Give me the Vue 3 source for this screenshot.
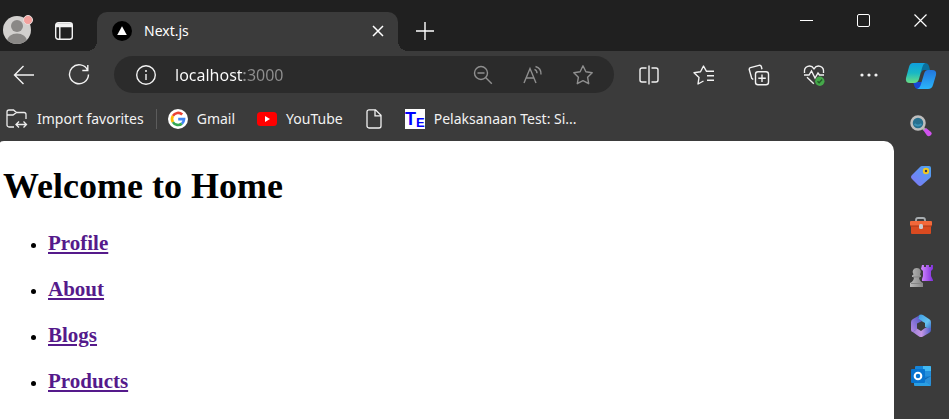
<script setup>
import { ref } from 'vue'

const address = ref('localhost:3000')
const links = ['Profile', 'About', 'Blogs', 'Products']
</script>

<template>
  <div class="browser">
    <header class="titlebar">
      <button class="avatar" aria-label="Account">
        <svg width="32" height="32" viewBox="0 0 32 32">
          <defs><clipPath id="face"><circle cx="15" cy="17" r="14" /></clipPath></defs>
          <circle cx="15" cy="17" r="14" fill="#d2d0ce" />
          <g clip-path="url(#face)" fill="#8a8886">
            <circle cx="15" cy="13" r="6" />
            <ellipse cx="15" cy="28" rx="10" ry="7.500" />
          </g>
          <circle cx="26" cy="7" r="4.500" fill="#f4a09c" stroke="#e9dedd" />
        </svg>
      </button>
      <button class="tool" aria-label="Tab actions">
        <svg width="20" height="20" viewBox="0 0 20 20" fill="none" stroke="#f2f2f2" stroke-width="1.400">
          <rect x="1.700" y="1.700" width="16.600" height="16.600" rx="2.500" />
          <path d="M2 4h16M2 5.500h16M2 3h16M5.800 6v12" />
        </svg>
      </button>
      <div class="tab">
        <svg width="20" height="20" viewBox="0 0 20 20">
          <circle cx="10" cy="10" r="10" fill="#000" />
          <path d="M10 5.200L14.800 14H5.200z" fill="#fff" />
        </svg>
        <span class="tab-title">Next.js</span>
        <button class="tab-close" aria-label="Close tab">
          <svg width="12" height="12" viewBox="0 0 12 12" stroke="#fff" stroke-width="1.500"><path d="M1 1l10 10M11 1L1 11" /></svg>
        </button>
      </div>
      <button class="new-tab" aria-label="New tab">
        <svg width="18" height="18" viewBox="0 0 18 18" stroke="#fff" stroke-width="1.400"><path d="M9 0v18M0 9h18" /></svg>
      </button>
      <div class="window-controls">
        <button aria-label="Minimize">
          <svg width="13" height="13" viewBox="0 0 13 13" stroke="#fff"><path d="M0 6.500h13" /></svg>
        </button>
        <button aria-label="Maximize">
          <svg width="13" height="13" viewBox="0 0 13 13" fill="none" stroke="#fff"><rect x=".5" y=".5" width="12" height="12" rx="1.500" /></svg>
        </button>
        <button aria-label="Close">
          <svg width="13" height="13" viewBox="0 0 13 13" stroke="#fff" stroke-width="1.200"><path d="M.5.5l12 12M12.500.5l-12 12" /></svg>
        </button>
      </div>
    </header>

    <div class="body">
      <div class="main">
        <div class="toolbar">
          <button class="tool" aria-label="Back">
            <svg width="22" height="20" viewBox="0 0 22 20" fill="none" stroke="#f2f2f2" stroke-width="1.400"><path d="M21 10H1.500M10.500 1L1.500 10l9 9" /></svg>
          </button>
          <button class="tool" aria-label="Refresh">
            <svg width="22" height="22" viewBox="0 0 22 22" fill="none" stroke="#f2f2f2" stroke-width="1.400"><path d="M19.600 6.200A9.500 9.500 0 1 0 20.500 10.500M19.800 1v5.500h-5.500" /></svg>
          </button>
          <div class="omnibox">
            <button class="info" aria-label="Site information">
              <svg width="22" height="22" viewBox="0 0 22 22" fill="none" stroke="#f2f2f2" stroke-width="1.400"><circle cx="11" cy="11" r="9.300" /><path d="M11 10v6" /><circle cx="11" cy="7" r=".4" /></svg>
            </button>
            <input v-model="address" class="address" aria-label="Address" spellcheck="false" />
            <button class="inner" aria-label="Zoom out">
              <svg width="20" height="20" viewBox="0 0 20 20" fill="none" stroke="#8f8f8f" stroke-width="1.400"><circle cx="8" cy="8" r="6.500" /><path d="M4.500 8h7M12.800 12.800l6 6" /></svg>
            </button>
            <button class="inner" aria-label="Read aloud">
              <svg width="20" height="20" viewBox="0 0 20 20" fill="none" stroke="#8f8f8f" stroke-width="1.400"><path d="M1 18L7 3.500l6 14.500M3.200 13h7.600M11.500 4.300q2.500 1 2.500 4M12.500 1.500q5.800 1.500 5.500 8" /></svg>
            </button>
            <button class="inner" aria-label="Add to favorites">
              <svg width="22" height="22" viewBox="0 0 22 22" fill="none" stroke="#8f8f8f" stroke-width="1.400" stroke-linejoin="round"><path d="M11 1.800l2.900 6 6.300.9-4.600 4.500 1.100 6.500-5.700-3-5.700 3 1.100-6.500-4.600-4.500 6.300-.9z" /></svg>
            </button>
          </div>
          <button class="tool" aria-label="Split screen">
            <svg width="20" height="20" viewBox="0 0 20 20" fill="none" stroke="#f2f2f2" stroke-width="1.400"><path d="M7.500 3H3a2 2 0 0 0-2 2v10a2 2 0 0 0 2 2h4.500M12.500 3H17a2 2 0 0 1 2 2v10a2 2 0 0 1-2 2h-4.500M10 .5v19" /></svg>
          </button>
          <button class="tool" aria-label="Favorites">
            <svg width="22" height="20" viewBox="0 0 22 20" fill="none" stroke="#f2f2f2" stroke-width="1.400" stroke-linejoin="round"><path d="M10.500 16l-5.500 3 1-6.500L1 7.800l6.500-1L10.500 1l3 5.300h7.500M14 10.800h7M14 15.300h7" /></svg>
          </button>
          <button class="tool" aria-label="Collections">
            <svg width="22" height="22" viewBox="0 0 22 22" fill="none" stroke="#f2f2f2" stroke-width="1.400"><rect x="7.500" y="7.700" width="13" height="13" rx="2.500" /><path d="M14 10.500v7.500M10.300 14.200h7.500M5.300 15.500L3.700 14.300 1.300 5.800q-.4-1.600 1.200-2.100L11 1.300q1.800-.5 2.300 1.200l.7 2.700" /></svg>
          </button>
          <button class="tool" aria-label="Browser essentials">
            <svg width="22" height="22" viewBox="0 0 22 22" fill="none" stroke="#f2f2f2" stroke-width="1.400"><path d="M1.500 9C.5 1.500 8 .2 11 4.800 14 .2 21.500 1.500 20.500 9M1 11h5l2.500-4 3.500 7 3-5 1.500 2H21M4 13.200l6.800 6.500" /><circle cx="16.800" cy="17.200" r="4.700" fill="#45a84a" stroke="none" /><path d="M14.500 17.200l1.600 1.600 3-3.200" stroke="#235c28" /></svg>
          </button>
          <button class="tool" aria-label="Settings and more">
            <svg width="18" height="4" viewBox="0 0 18 4" fill="#f2f2f2"><circle cx="2" cy="2" r="1.600" /><circle cx="9" cy="2" r="1.600" /><circle cx="16" cy="2" r="1.600" /></svg>
          </button>
        </div>

        <nav class="bookmarks" aria-label="Favorites bar">
          <button class="bookmark import">
            <svg width="22" height="20" viewBox="0 0 22 20" fill="none" stroke="#ececec" stroke-width="1.300"><path d="M8 18H3a2 2 0 0 1-2-2V3a2 2 0 0 1 2-2h4.500l3 2.500H18a2 2 0 0 1 2 2V10M1 6h6l3.500-2.500M10.500 15.500H20M13 12.500l-3 3 3 3M17.500 12.500l3 3-3 3" /></svg>
            <span>Import favorites</span>
          </button>
          <a class="bookmark" href="#gmail">
            <svg width="20" height="20" viewBox="0 0 20 20">
              <circle cx="10" cy="10" r="10" fill="#fff" />
              <g fill="none" stroke-width="2.700">
                <path d="M14.200 5.600A6 6 0 0 0 4.900 6.900" stroke="#ea4335" />
                <path d="M4.900 6.900a6 6 0 0 0 0 6.200" stroke="#fbbc05" />
                <path d="M4.900 13.100a6 6 0 0 0 9 1.500" stroke="#34a853" />
                <path d="M13.900 14.600A6 6 0 0 0 16 10.200H10.200" stroke="#4285f4" />
              </g>
            </svg>
            <span>Gmail</span>
          </a>
          <a class="bookmark" href="#youtube">
            <svg width="20" height="14" viewBox="0 0 20 14"><rect width="20" height="14" rx="3.500" fill="#f00" /><path d="M8 4l5 3-5 3z" fill="#fff" /></svg>
            <span>YouTube</span>
          </a>
          <a class="bookmark" href="#page" aria-label="Page">
            <svg width="18" height="20" viewBox="0 0 18 20" fill="none" stroke="#f2f2f2" stroke-width="1.300"><path d="M4 .8h6.500L16 6.300V17a2 2 0 0 1-2 2H4a2 2 0 0 1-2-2V2.800a2 2 0 0 1 2-2zM10 1v5.800h6" /></svg>
          </a>
          <a class="bookmark" href="#test">
            <svg class="te" width="20" height="20" viewBox="0 0 20 20"><rect width="20" height="20" fill="#fff" /><text x="0" y="16">T</text><text x="11" y="18" class="small">E</text></svg>
            <span>Pelaksanaan Test: Si...</span>
          </a>
        </nav>

        <main class="page">
          <h1>Welcome to Home</h1>
          <ul>
            <li v-for="link in links" :key="link"><h3><a :href="'#' + link.toLowerCase()">{{ link }}</a></h3></li>
          </ul>
        </main>
      </div>

      <aside class="sidebar" aria-label="Sidebar">
        <button aria-label="Copilot">
          <svg width="32" height="28" viewBox="0 0 32 28">
            <defs>
              <linearGradient id="cpA" x1="0" y1="0" x2="0" y2="1"><stop offset="0" stop-color="#0f9fde" /><stop offset=".5" stop-color="#19b8c4" /><stop offset="1" stop-color="#6ade83" /></linearGradient>
              <linearGradient id="cpB" x1="0" y1="0" x2="0" y2="1"><stop offset="0" stop-color="#2275dc" /><stop offset="1" stop-color="#2ab5fb" /></linearGradient>
            </defs>
            <path d="M14 1h6q3 0 4 3l1 4h-6q-2 0-3 3z" fill="#0b6f9c" />
            <path d="M8 20h9l-2 7h-2q-3 0-4-4z" fill="#1747d4" />
            <path d="M8 1h12q-2 1-3 5l-3 11q-1 4-5 4H5q-5 0-4-5L4 5q1-4 4-4z" fill="url(#cpA)" />
            <path d="M23 8h4q5 0 4 5l-3 10q-1 4-5 4H12q3-1 4-5l3-10q1-4 4-4z" fill="url(#cpB)" />
          </svg>
        </button>
        <button aria-label="Search">
          <svg width="22" height="22" viewBox="0 0 22 22"><path d="M12 12l3 3" stroke="#aaa" stroke-width="3" /><path d="M13.500 15.500l2.500-2.500 5 4q1.500 1.500-.5 3.500-2 1.500-3.500 0z" fill="#d052ee" /><circle cx="8" cy="8" r="6.500" fill="#28708f" stroke="#bebebe" stroke-width="2.500" /><path d="M4.500 9q3.500 3 7 0" stroke="#3b92b4" stroke-width="2" fill="none" /></svg>
        </button>
        <button aria-label="Shopping">
          <svg width="22" height="22" viewBox="0 0 22 22">
            <defs><linearGradient id="tag" x1="1" y1="0" x2="0" y2="1"><stop stop-color="#49a3f2" /><stop offset="1" stop-color="#8276f5" /></linearGradient></defs>
            <path d="M12 1h7q2 0 2 2v8q0 1-1 2l-8 7q-2 2-4 0l-6-6q-2-2 0-4l8-8q1-1 2-1z" fill="url(#tag)" /><circle cx="16" cy="6" r="2.200" fill="#335" stroke="#f0c820" stroke-width="2" />
          </svg>
        </button>
        <button aria-label="Tools">
          <svg width="24" height="20" viewBox="0 0 24 20"><path d="M7 6V4q0-2 2-2h5q2 0 2 2v2" fill="none" stroke="#a8adb0" stroke-width="1.800" /><rect x="2" y="6" width="20" height="12" rx="1" fill="#d94a20" /><rect x="1" y="5" width="22" height="5" rx="1" fill="#f2683a" /><path d="M1 10h22" stroke="#a83819" /><rect x="10" y="8" width="4" height="5" rx="1.500" fill="#c7cbd0" /></svg>
        </button>
        <button aria-label="Games">
          <svg width="24" height="24" viewBox="0 0 24 24">
            <defs><linearGradient id="rook" x1="0" x2="1"><stop stop-color="#d48bff" /><stop offset="1" stop-color="#8130dc" /></linearGradient><linearGradient id="pawn" x1="0" x2="1"><stop stop-color="#bbb" /><stop offset="1" stop-color="#858585" /></linearGradient></defs>
            <path d="M13 1h2v2h2V1h3v2h2V1h2v4l-2 2v5l2 4v1H13v-2l1-3V7l-2-2z" fill="url(#rook)" />
            <path d="M8 4a4 4 0 0 1 3 6.500l1 1v1.500h-2q0 4 4 6v4H1v-4q4-2 4-6H3v-1.500l1.500-1A4 4 0 0 1 8 4z" fill="url(#pawn)" />
            <path d="M2 19.500h11M4 13h7" stroke="#858585" />
          </svg>
        </button>
        <button aria-label="Microsoft 365">
          <svg width="22" height="24" viewBox="0 0 22 24">
            <defs>
              <linearGradient id="mA" x1="1" y1="0" x2="0" y2="1"><stop stop-color="#4654c4" /><stop offset="1" stop-color="#b58ae6" /></linearGradient>
              <linearGradient id="mB" x1="0" y1="0" x2="1" y2="1"><stop stop-color="#3b9be4" /><stop offset=".6" stop-color="#66c3f0" /><stop offset="1" stop-color="#3c63c4" /></linearGradient>
              <linearGradient id="mC" x1="0" x2="1"><stop stop-color="#9b80d8" /><stop offset=".5" stop-color="#c596e4" /><stop offset="1" stop-color="#4d5fc8" /></linearGradient>
            </defs>
            <path d="M9 1Q11 0 13 1l6 4q2 1 2 3v8l-6-3V9L8 5z" fill="url(#mB)" />
            <path d="M10 1L3 5Q1 6 1 8v8q0 2 2 2l4-3V9.500L12 7 8 4.500z" fill="url(#mA)" />
            <path d="M2 17.500q3 0 5-3l4 2.500 4-3 6 0v2q0 2-2 3l-6 3.500q-2 1-4 0z" fill="url(#mC)" />
          </svg>
        </button>
        <button aria-label="Outlook">
          <svg width="22" height="22" viewBox="0 0 22 22"><rect x="5" y="1" width="16" height="15" rx="1" fill="#1685d8" /><path d="M13 1h7q1 0 1 1v4h-8z" fill="#41b9f3" /><path d="M13 6h8v5h-8z" fill="#248fdc" /><path d="M4 15h17v5q0 1-1 1H5q-1 0-1-1z" fill="#2a9fe4" /><path d="M12 14l9 6v-9z" fill="#1568b0" /><path d="M13 16l8-5v9z" fill="#2a8fd8" /><rect x="1" y="4" width="14" height="14" rx="1" fill="#0874cf" /><circle cx="8" cy="11" r="3.300" fill="none" stroke="#fff" stroke-width="2.100" /></svg>
        </button>
      </aside>
    </div>
  </div>
</template>

<style>
body {
  margin: 0;
}
</style>

<style scoped>
.browser {
  display: flex;
  flex-direction: column;
  min-height: 100vh;
  background: #3b3b3b;
  color: #fff;
  font-family: "Noto Sans", "Open Sans", sans-serif;
  font-size: 14px;
}
button {
  display: flex;
  align-items: center;
  justify-content: center;
  flex: none;
  padding: 0;
  border: 0;
  background: none;
  color: inherit;
  font: inherit;
}
svg {
  display: block;
  flex: none;
}
.titlebar {
  display: flex;
  align-items: flex-end;
  height: 51px;
  padding-left: 2px;
  background: #202020;
}
.titlebar > .avatar,
.titlebar > .tool,
.new-tab {
  height: 40px;
}
.avatar {
  width: 32px;
  padding-bottom: 4px;
}
.tool {
  width: 40px;
  height: 40px;
}
.titlebar > .tool {
  margin: 0 13px 0 10px;
}
.tab {
  position: relative;
  display: flex;
  align-items: center;
  gap: 12px;
  box-sizing: border-box;
  width: 301px;
  height: 39px;
  padding: 0 12px 2px 15px;
  border-radius: 10px 10px 0 0;
  background: #3b3b3b;
}
.tab::before,
.tab::after {
  content: "";
  position: absolute;
  bottom: 0;
  width: 10px;
  height: 10px;
}
.tab::before {
  right: 100%;
  background: radial-gradient(circle at 0 0, transparent 10px, #3b3b3b 10px);
}
.tab::after {
  left: 100%;
  background: radial-gradient(circle at 100% 0, transparent 10px, #3b3b3b 10px);
}
.tab-title {
  flex: 1;
}
.tab-close {
  width: 16px;
  height: 24px;
}
.new-tab {
  width: 53px;
}
.window-controls {
  display: flex;
  align-self: flex-start;
  margin-left: auto;
}
.window-controls button {
  width: 57px;
  height: 41px;
}
.body {
  display: flex;
  flex: 1;
}
.main {
  display: flex;
  flex: 1;
  flex-direction: column;
  min-width: 0;
}
.toolbar {
  display: flex;
  align-items: center;
  gap: 15px;
  height: 47px;
  padding: 0 5px 0 4px;
}
.omnibox {
  display: flex;
  align-items: center;
  flex: 1;
  box-sizing: border-box;
  height: 37px;
  min-width: 0;
  padding: 0 10px 0 16px;
  border-radius: 19px;
  background: #2b2b2b;
}
.info {
  width: 32px;
}
.address {
  flex: 1;
  min-width: 0;
  margin-left: 13px;
  padding: 0;
  border: 0;
  outline: 0;
  background: linear-gradient(90deg, #fff 69px, #8f8f8f 69px);
  background-clip: text;
  -webkit-background-clip: text;
  color: transparent;
  font: inherit;
  font-size: 16px;
}
.inner {
  width: 42px;
  margin-left: 8px;
}
.bookmarks {
  display: flex;
  align-items: center;
  height: 41px;
  padding: 0 0 2px 6px;
  gap: 22px;
}
.bookmark {
  display: flex;
  align-items: center;
  gap: 9px;
  color: #f2f2f2;
  text-decoration: none;
  white-space: nowrap;
}
.import {
  height: 20px;
  padding-right: 12px;
  margin-right: -11px;
  border-right: 1px solid #5c5c5c;
}
.te text {
  fill: #00f;
  font: bold 18px "Liberation Sans", sans-serif;
}
.te .small {
  font-size: 13px;
}
.page {
  flex: 1;
  padding: 24px 3px 0;
  border-radius: 4px 10px 0 0 / 2px 10px 0 0;
  background: #fff;
  color: #000;
  font-family: "Liberation Serif", serif;
}
h1 {
  margin: 0;
  font-size: 36px;
  line-height: 42px;
}
ul {
  margin: 22px 0 0;
  padding-left: 45px;
  font-size: 18px;
}
h3 {
  margin: 0 0 18px;
  font-size: 21px;
  line-height: 28px;
}
h3 a {
  color: #551a8b;
}
.sidebar {
  display: flex;
  flex-direction: column;
  box-sizing: border-box;
  width: 55px;
  padding-right: 1px;
}
.sidebar button {
  height: 50px;
}
</style>
